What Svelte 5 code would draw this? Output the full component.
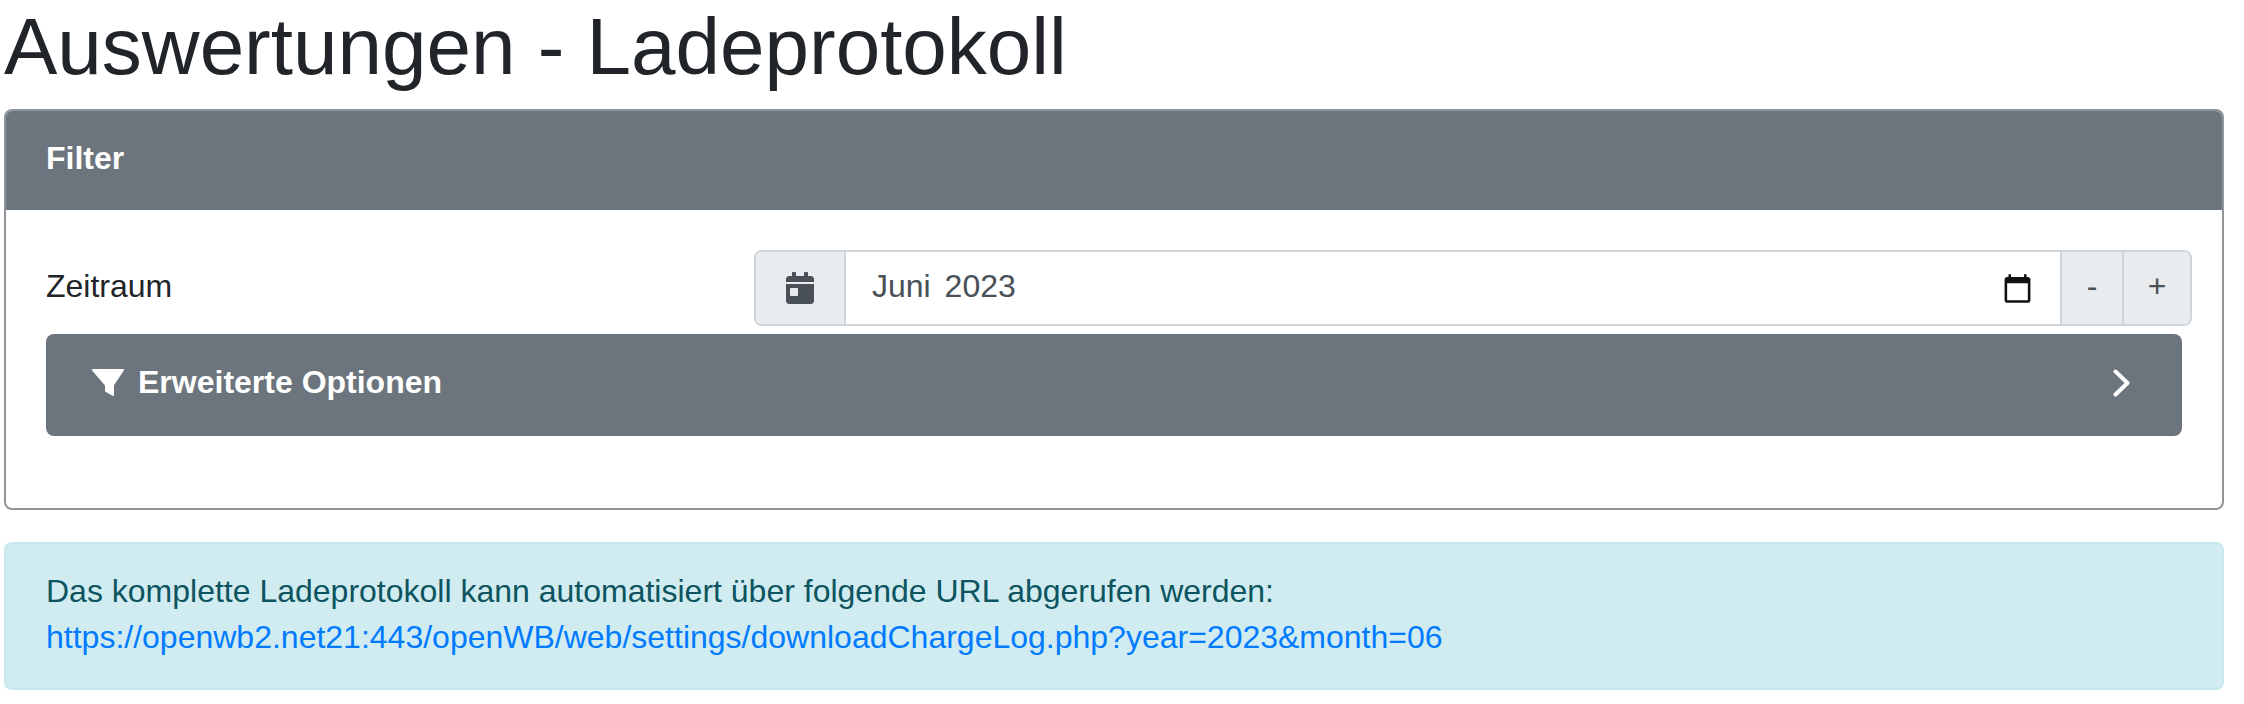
<script>
    const url = 'https://openwb2.net21:443/openWB/web/settings/downloadChargeLog.php?year=2023&month=06';
</script>

<main>
    <h1>Auswertungen - Ladeprotokoll</h1>

    <section class="card">
        <header>Filter</header>
        <div class="card-body">
            <div class="row">
                <span class="label">Zeitraum</span>
                <div class="input-group">
                    <span class="prepend">
                        <svg viewBox="0 0 448 512" width="28" height="32"><path fill="currentColor" d="M0 464c0 26.500 21.500 48 48 48h352c26.500 0 48-21.500 48-48V192H0v272zm64-192c0-8.800 7.200-16 16-16h96c8.800 0 16 7.200 16 16v96c0 8.800-7.200 16-16 16H80c-8.800 0-16-7.200-16-16v-96zM400 64h-48V16c0-8.800-7.200-16-16-16h-32c-8.800 0-16 7.200-16 16v48H160V16c0-8.800-7.200-16-16-16h-32c-8.800 0-16 7.200-16 16v48H48C21.500 64 0 85.500 0 112v48h448v-48c0-26.500-21.500-48-48-48z"/></svg>
                    </span>
                    <div class="month">
                        <span class="value">Juni 2023</span>
                        <svg viewBox="0 0 24 24" width="31" height="31"><path fill="#111" d="M20 3h-1V1h-2v2H7V1H5v2H4c-1.100 0-2 .9-2 2v16c0 1.100.9 2 2 2h16c1.100 0 2-.9 2-2V5c0-1.100-.9-2-2-2zm0 18H4V8h16v13z"/></svg>
                    </div>
                    <span class="step minus">-</span>
                    <span class="step plus">+</span>
                </div>
            </div>

            <button class="toggle">
                <svg class="funnel" viewBox="0 0 32 28" width="32" height="28"><path fill="currentColor" stroke="currentColor" stroke-width="2" stroke-linejoin="round" d="M1 1H31L21 16V26L14 22V16Z"/></svg>
                <span class="toggle-text">Erweiterte Optionen</span>
                <svg class="chevron" viewBox="0 0 17 28" width="17" height="28"><path fill="none" stroke="currentColor" stroke-width="4" stroke-linecap="round" stroke-linejoin="round" d="M2.500 2.500L14.500 14L2.500 25.500"/></svg>
            </button>
        </div>
    </section>

    <div class="alert">
        Das komplette Ladeprotokoll kann automatisiert über folgende URL abgerufen werden:<br />
        <a href={url}>{url}</a>
    </div>
</main>

<style>
    :global(body) {
        margin: 0;
        background: #fff;
    }

    main {
        padding: 0 20px 0 4px;
        font-family: "Liberation Sans", Arial, sans-serif;
        font-size: 32px;
        line-height: 46px;
        color: #212529;
    }

    h1 {
        margin: 0 0 16px;
        font-size: 80px;
        font-weight: 400;
        line-height: 93px;
    }

    .card {
        border: 2px solid #8f959b;
        border-radius: 8px;
        overflow: hidden;
        height: 401px;
        box-sizing: border-box;
    }

    header {
        background: #6c757d;
        color: #fff;
        font-weight: 700;
        height: 99px;
        padding: 0 40px;
        line-height: 95px;
    }

    .card-body {
        padding: 40px 40px 0;
    }

    .row {
        display: grid;
        grid-template-columns: 708px 1fr;
        align-items: center;
        margin-right: -10px;
    }

    .label {
        padding-bottom: 4px;
    }

    .input-group {
        display: flex;
        height: 76px;
        box-sizing: border-box;
        border: 2px solid #ced4da;
        border-radius: 8px;
        overflow: hidden;
        color: #495057;
    }

    .prepend,
    .step {
        display: flex;
        align-items: center;
        justify-content: center;
        background: #e9ecef;
    }

    .prepend {
        width: 88px;
        border-right: 2px solid #ced4da;
    }

    .month {
        flex: 1;
        display: flex;
        align-items: center;
        justify-content: space-between;
        padding: 0 27px 0 26px;
    }

    .value {
        padding-bottom: 4px;
        word-spacing: 5px;
    }

    .step {
        border-left: 2px solid #ced4da;
        padding-bottom: 4px;
        box-sizing: border-box;
    }

    .minus {
        width: 62px;
    }

    .plus {
        width: 68px;
    }

    .toggle {
        display: flex;
        align-items: center;
        width: 100%;
        height: 102px;
        margin-top: 8px;
        padding: 0 52px 4px 46px;
        border: 0;
        border-radius: 8px;
        background: #6c757d;
        color: #fff;
        font: 700 32px/46px "Liberation Sans", Arial, sans-serif;
    }

    .funnel {
        margin-right: 14px;
    }

    .toggle-text {
        padding-bottom: 2px;
    }

    .chevron {
        margin-left: auto;
    }

    .alert {
        margin-top: 32px;
        padding: 24px 40px;
        height: 148px;
        box-sizing: border-box;
        border-radius: 8px;
        background: #d1ecf1;
        border: 2px solid #c8e8ee;
        color: #0c5460;
    }

    a {
        color: #007bff;
        text-decoration: none;
    }
</style>
